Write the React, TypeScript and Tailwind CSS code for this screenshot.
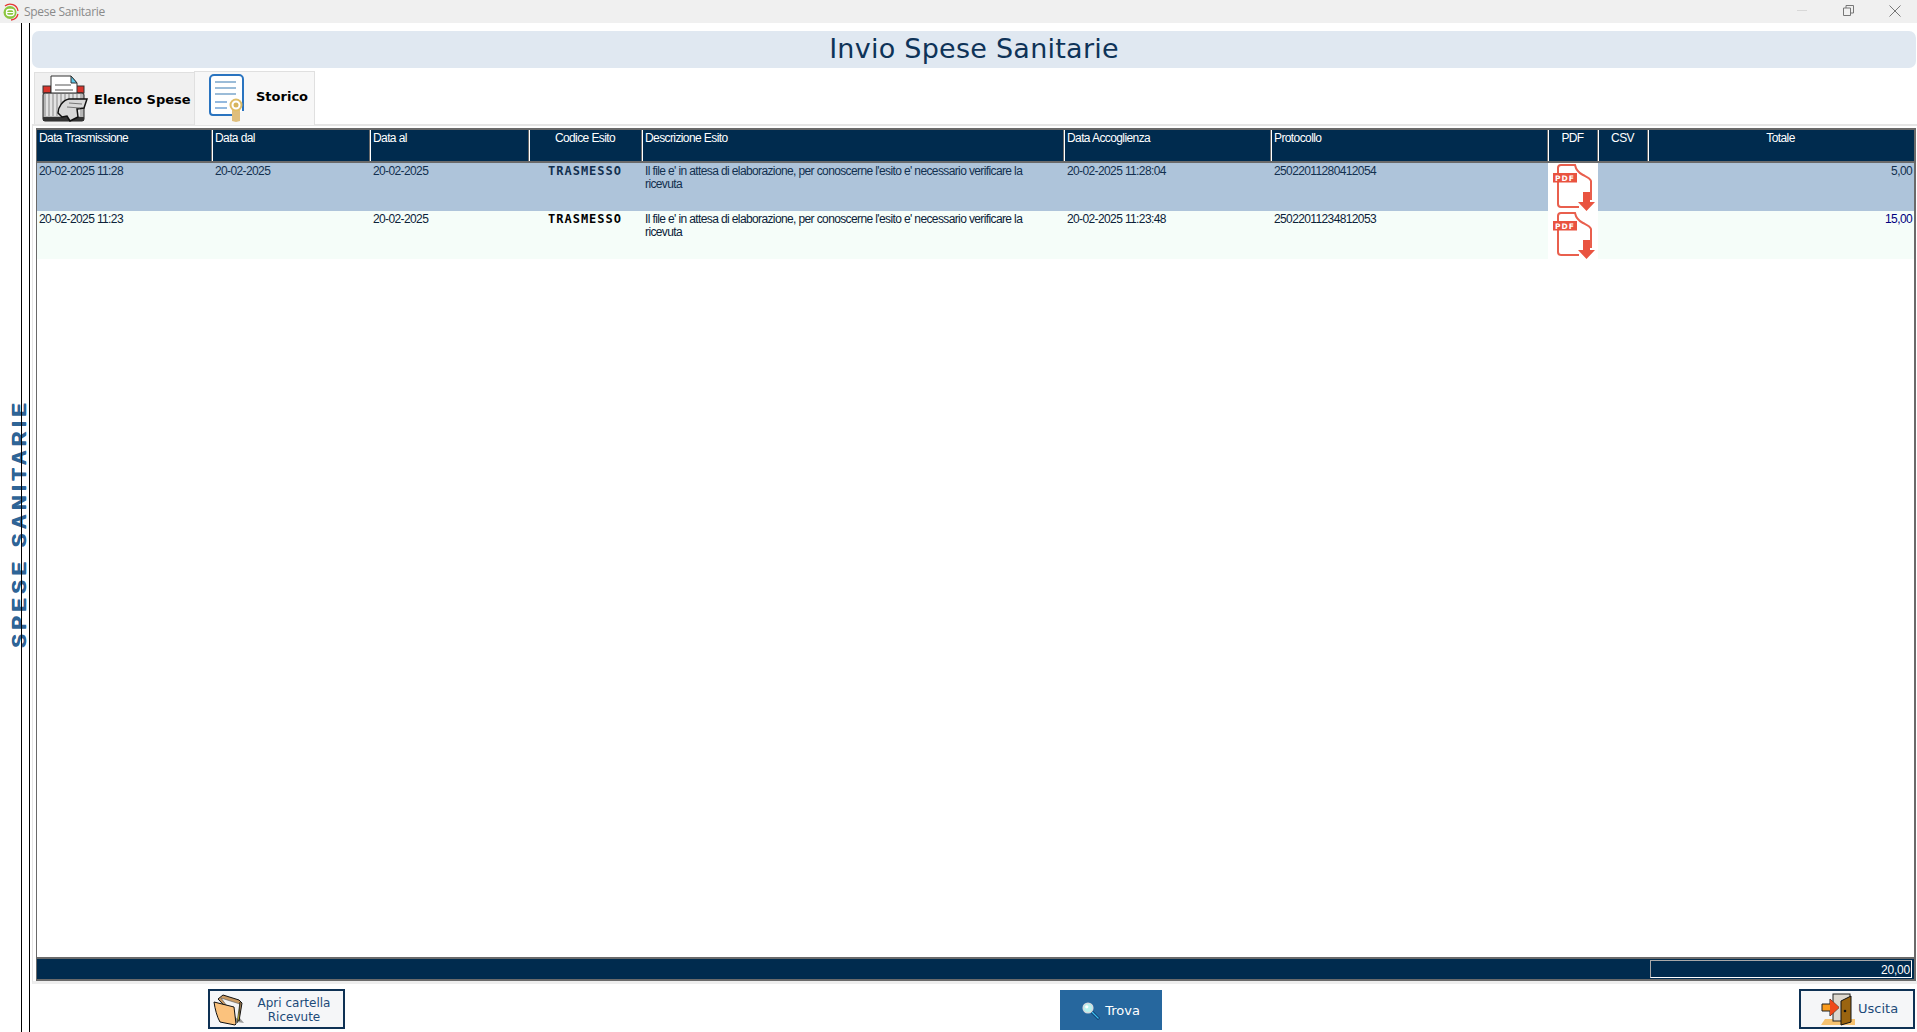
const grid = "grid grid-cols-[175px_158px_159px_113px_422px_207px_277px_50px_50px_266px]";

const headers = [
  { label: "Data Trasmissione" },
  { label: "Data dal" },
  { label: "Data al" },
  { label: "Codice Esito", center: true },
  { label: "Descrizione Esito" },
  { label: "Data Accoglienza" },
  { label: "Protocollo" },
  { label: "PDF", center: true },
  { label: "CSV", center: true },
  { label: "Totale", center: true },
];

const rows = [
  {
    trasmissione: "20-02-2025 11:28",
    dal: "20-02-2025",
    al: "20-02-2025",
    accoglienza: "20-02-2025 11:28:04",
    protocollo: "25022011280412054",
    totale: "5,00",
    selected: true,
  },
  {
    trasmissione: "20-02-2025 11:23",
    dal: "",
    al: "20-02-2025",
    accoglienza: "20-02-2025 11:23:48",
    protocollo: "25022011234812053",
    totale: "15,00",
    selected: false,
  },
];

function AppIcon() {
  return (
    <svg width="18" height="18" viewBox="0 0 18 18" className="ml-px mr-[5px]">
      <circle cx="9" cy="9.500" r="6.500" fill="#8cc63f" />
      <path d="M4 3a8 8 0 0 1 13 5M17 11a8 8 0 0 1-7 6" fill="none" stroke="#e53935" strokeWidth="1.300" />
      <rect x="5.500" y="6.500" width="7.500" height="6" rx="2.500" fill="none" stroke="#fff" strokeWidth="1.300" />
      <path d="M6 9.500h6.500" stroke="#fff" />
    </svg>
  );
}

function PrinterIcon() {
  return (
    <svg width="46" height="48" viewBox="0 0 46 48" className="shrink-0">
      <rect x="1" y="11" width="8" height="7" fill="#d9342b" stroke="#333" />
      <rect x="34" y="11" width="8" height="7" fill="#d9342b" stroke="#333" />
      <path d="M9 1h20l6 7v12H9z" fill="#fff" stroke="#333" />
      <path d="M29 1l6 7h-6z" fill="#5ac8ea" stroke="#333" />
      <path d="M13 10h16M13 15h18" stroke="#aaa" strokeWidth="2" />
      <rect x="1" y="18" width="41" height="28" rx="2" fill="#b5b5b5" stroke="#222" />
      <path d="M5 19v22M9 19v22M13 19v22M17 19v22M21 19v22M25 19v22M29 19v22M33 19v22M37 19v22" stroke="#f2f2f2" strokeWidth="1.500" />
      <rect x="1" y="42" width="41" height="4" fill="#333" />
      <path d="M16 38c0-6 5-13 11-14h18l-3 9-7 1 1 8-8 4-3-5-5 1z" fill="#d8d8d8" stroke="#111" strokeWidth="1.500" />
      <path d="M27 28l13 1M25 32l13 1" stroke="#777" />
    </svg>
  );
}

function CertificateIcon() {
  return (
    <svg width="38" height="50" viewBox="0 0 38 50" className="shrink-0">
      <path d="M35 38V6a4 4 0 0 0-4-4H6a4 4 0 0 0-4 4v33a3 3 0 0 0 3 3h20" fill="#fff" stroke="#2a74c0" strokeWidth="2" />
      <path d="M7 9h21M7 15h21M7 21h21" stroke="#7ba7cc" strokeWidth="1.500" />
      <path d="M7 29h12M7 35h12" stroke="#2a74c0" strokeWidth="1.200" />
      <path d="M24 36h8v12l-4 1-4-1z" fill="#dfbe7c" />
      <circle cx="28" cy="32" r="5.500" fill="#fff" stroke="#e0bd66" strokeWidth="2" />
      <circle cx="28" cy="32" r="2.500" fill="#d7b45c" />
    </svg>
  );
}

function PdfIcon() {
  return (
    <svg width="48" height="48" viewBox="0 0 48 48" className="block">
      <path
        d="M8 19v22a3 3 0 0 0 3 3h18M8 10V5a3 3 0 0 1 3-3h14c1 5 4 8 8 10 4 2 7 3 8 6v19"
        fill="none"
        stroke="#e95f4d"
        strokeWidth="2"
      />
      <rect x="3" y="10" width="24" height="9.500" fill="#e95340" />
      <text
        x="15"
        y="18"
        textAnchor="middle"
        fontFamily="'DejaVu Sans', sans-serif"
        fontWeight="700"
        fontSize="7.500"
        letterSpacing="1"
        fill="#fff"
      >
        PDF
      </text>
      <path d="M33 29h7v10h5l-8.500 9-8.500-9h5z" fill="#e95340" />
    </svg>
  );
}

function FolderIcon() {
  return (
    <svg width="32" height="34" viewBox="0 0 32 34" className="shrink-0">
      <path d="M11 28l20 3-5-6z" fill="#999" />
      <path d="M5 7l5-4 16 5 3 3-3 18z" fill="#c99a63" stroke="#111" />
      <path d="M8 6l19 6-2 17z" fill="#f3f3f3" stroke="#555" strokeWidth=".6" />
      <path d="M27 10l-1 17-2 4z" fill="#fff04a" stroke="#111" strokeWidth=".6" />
      <path d="M1 10l20 5 2 17-1 1-15-3C4 25 2 17 1 10z" fill="#fbc27d" stroke="#111" />
    </svg>
  );
}

function SearchIcon() {
  return (
    <svg width="18" height="18" viewBox="0 0 18 18" className="shrink-0">
      <path d="M9.500 9.500l7.500 7.500" stroke="#0a3c6e" strokeWidth="3" />
      <path d="M10 10l6.500 6.500" stroke="#3ec0f0" strokeWidth="1.200" />
      <circle cx="6" cy="6" r="4.800" fill="#b8f2ee" stroke="#d5dadd" strokeWidth="1.500" />
      <circle cx="4.800" cy="4.800" r="1.600" fill="#fff" />
    </svg>
  );
}

function DoorIcon() {
  return (
    <svg width="34" height="33" viewBox="0 0 34 33" className="shrink-0">
      <path d="M0 32l4-6h30v6z" fill="#f6c270" />
      <rect x="12" y="1" width="17" height="27" fill="#ddd8cf" stroke="#222" />
      <path d="M20 8l10-5v26l-10 3z" fill="#9a6410" stroke="#111" />
      <circle cx="24" cy="18" r="1.300" fill="#111" />
      <path d="M1 11h8V6l9 8.500-9 8.500v-5H1z" fill="#f89a1c" stroke="#222" />
      <path d="M9 6l9 8.500-9 8.500z" fill="#ef4a1c" />
    </svg>
  );
}

function DataRow({ row }: { row: (typeof rows)[number] }) {
  const text = row.selected ? "text-[#12304f]" : "text-[#0b2238]";
  return (
    <div className={`${grid} h-[48px] text-[12px] leading-[13px] tracking-[-0.62px] ${text} ${row.selected ? "bg-[#aec4da]" : "bg-[#f5fdf9]"}`}>
      <div className="pl-[2px] pt-[2px]">{row.trasmissione}</div>
      <div className="pl-[3px] pt-[2px]">{row.dal}</div>
      <div className="pl-[3px] pt-[2px]">{row.al}</div>
      <div className={`pt-[2px] pl-[19px] font-['DejaVu_Sans_Mono',monospace] font-bold tracking-[1px] whitespace-nowrap ${row.selected ? "text-[#12304f]" : "text-black"}`}>
        TRASMESSO
      </div>
      <div className="pl-[3px] pr-[40px] pt-[2px]">
        Il file e' in attesa di elaborazione, per conoscerne l'esito e' necessario verificare la ricevuta
      </div>
      <div className="pl-[3px] pt-[2px]">{row.accoglienza}</div>
      <div className="pl-[3px] pt-[2px]">{row.protocollo}</div>
      <div className="bg-white pl-[2px]">
        <PdfIcon />
      </div>
      <div />
      <div className={`pt-[2px] pr-[2px] text-right ${row.selected ? "" : "text-[#00007f]"}`}>{row.totale}</div>
    </div>
  );
}

export default function App() {
  return (
    <div className="w-[1917px] h-[1032px] overflow-hidden flex flex-col bg-white font-['Liberation_Sans',sans-serif]">
      {/* barra del titolo */}
      <div className="h-[23px] shrink-0 bg-[#f0f0f0] flex items-center">
        <AppIcon />
        <span className="text-[12px] tracking-[-0.3px] text-[#8a8a8a] font-['Open_Sans',sans-serif]">Spese Sanitarie</span>
        <div className="ml-auto flex items-center -mt-[2px]">
          <div className="w-[10px] h-px bg-[#d8d8d8] mr-[36px]" />
          <svg width="11" height="11" viewBox="0 0 11 11" className="mr-[35px]">
            <path d="M.5 3h7v7.500h-7zM3 3V.5h7.500V8H8" fill="none" stroke="#777" />
          </svg>
          <svg width="12" height="12" viewBox="0 0 12 12" className="mr-[16px]">
            <path d="M.5.500l11 11M11.500.500l-11 11" stroke="#777" />
          </svg>
        </div>
      </div>

      <div className="flex-1 flex min-h-0">
        {/* fascia laterale */}
        <div className="relative w-[30px] shrink-0 flex">
          <div className="relative z-10 w-[22px] border-r border-black" />
          <div className="w-[8px] border-r border-black" />
          <div className="absolute left-[9px] top-[377px] h-[246px] flex items-center justify-center [writing-mode:vertical-rl] rotate-180 text-[20px] leading-[20px] font-bold tracking-[4.7px] text-[#2f6496] [text-shadow:1px_0_0_#2f6496] whitespace-nowrap">
            SPESE SANITARIE
          </div>
        </div>

        <div className="flex-1 min-w-0 flex flex-col">
          {/* titolo */}
          <div className="h-[37px] mt-[8px] ml-[2px] mr-px rounded-[7px] bg-[#e0e8f1] flex items-center justify-center font-['DejaVu_Sans',sans-serif] text-[27px] tracking-[0.25px] text-[#0e3358]">
            Invio Spese Sanitarie
          </div>

          {/* schede */}
          <div className="h-[54px] mt-[3px] ml-[4px] flex items-end font-['DejaVu_Sans',sans-serif] text-[13px] font-bold text-black">
            <div className="w-[160px] h-[52px] mb-px bg-[#f0f0f0] border-t border-l border-[#e0e0e0] flex items-center pl-[7px] gap-[6px]">
              <PrinterIcon />
              <span className="whitespace-nowrap mt-[2px]">Elenco Spese</span>
            </div>
            <div className="relative z-10 w-[121px] h-[54px] bg-[#f7f7f7] border-t border-x border-[#e0e0e0] flex items-start pl-[13px] pt-[1px] gap-[10px]">
              <CertificateIcon />
              <span className="mt-[14px]">Storico</span>
            </div>
          </div>

          {/* griglia */}
          <div className="h-[860px] ml-[2px] border-t-2 border-l border-b-[3px] border-t-[#e5e5e5] border-l-[#e5e5e5] border-b-[#eeeeee] pl-[3px] pr-px pt-[2px] -mt-px">
            <div className="h-[853px] border-l border-r-2 border-t-2 border-b-[2px] border-[#6a6a6a] flex flex-col bg-white">
              <div className={`${grid} h-[33px] border-b-2 border-[#6a6a6a] bg-[#002b4e] text-[12px] leading-[14px] tracking-[-0.6px] text-white`}>
                {headers.map((h, i) => (
                  <div
                    key={h.label}
                    className={`pt-[1px] ${i > 0 ? "border-l border-l-white shadow-[-1px_0_0_#6a6a6a]" : ""} ${h.center ? "text-center pr-[2px]" : "pl-[2px]"}`}
                  >
                    {h.label}
                  </div>
                ))}
              </div>

              {rows.map((r) => (
                <DataRow key={r.trasmissione} row={r} />
              ))}

              <div className="flex-1" />

              {/* totali */}
              <div className="h-[22px] border-t-2 border-[#6a6a6a] bg-[#002b4e] flex justify-end pr-[2px] py-px">
                <div className="w-[262px] h-[18px] border-l border-t border-[#a8a8a8] border-r-white border-b-white border-r border-b text-right text-[12px] leading-[19px] pr-px tracking-[-0.2px] text-white">
                  20,00
                </div>
              </div>
            </div>
          </div>

          {/* pulsanti */}
          <div className="flex items-start mt-[5px] font-['DejaVu_Sans',sans-serif] text-[12px] text-[#1d4a78]">
            <div className="ml-[178px] w-[137px] h-[40px] border-2 border-[#0e3154] bg-[#f5f6f8] flex items-center pl-[3px]">
              <FolderIcon />
              <span className="flex-1 text-center leading-[14px] mt-[2px]">
                Apri cartella
                <br />
                Ricevute
              </span>
            </div>
            <div className="ml-[715px] mt-px w-[102px] h-[40px] bg-[#26679e] text-white flex items-center justify-center gap-[5px] text-[13px] pt-px">
              <SearchIcon />
              <span>Trova</span>
            </div>
            <div className="ml-auto mr-[2px] w-[116px] h-[40px] border-2 border-[#0e3154] bg-[#f5f6f8] flex items-center pl-[20px] gap-[3px] text-[13px]">
              <DoorIcon />
              <span>Uscita</span>
            </div>
          </div>
        </div>
      </div>
    </div>
  );
}
